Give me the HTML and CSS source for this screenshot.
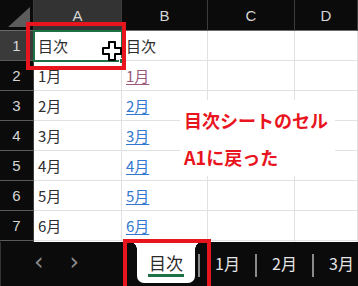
FILE: index.html
```html
<!DOCTYPE html>
<html lang="ja">
<head>
  <meta charset="UTF-8" />
  <title>目次シート</title>
  <link rel="stylesheet" href="styles.css">
</head>
<body>
  <div class="window">

    <!-- シート -->
    <div class="sheet">
      <div class="hd corner"></div>
      <div class="hd col is-sel">A</div>
      <div class="hd col">B</div>
      <div class="hd col">C</div>
      <div class="hd col">D</div>

      <div class="rh is-sel">1</div>
      <div class="cell">目次</div>
      <div class="cell">目次</div>
      <div class="cell"></div>
      <div class="cell"></div>

      <div class="rh">2</div>
      <div class="cell">1月</div>
      <div class="cell"><span class="link visited">1月</span></div>
      <div class="cell"></div>
      <div class="cell"></div>

      <div class="rh">3</div>
      <div class="cell">2月</div>
      <div class="cell"><span class="link">2月</span></div>
      <div class="cell"></div>
      <div class="cell"></div>

      <div class="rh">4</div>
      <div class="cell">3月</div>
      <div class="cell"><span class="link">3月</span></div>
      <div class="cell"></div>
      <div class="cell"></div>

      <div class="rh">5</div>
      <div class="cell">4月</div>
      <div class="cell"><span class="link">4月</span></div>
      <div class="cell"></div>
      <div class="cell"></div>

      <div class="rh">6</div>
      <div class="cell">5月</div>
      <div class="cell"><span class="link">5月</span></div>
      <div class="cell"></div>
      <div class="cell"></div>

      <div class="rh">7</div>
      <div class="cell">6月</div>
      <div class="cell"><span class="link">6月</span></div>
      <div class="cell"></div>
      <div class="cell"></div>

      <div class="rh"></div>
      <div class="cell"></div>
      <div class="cell"></div>
      <div class="cell"></div>
      <div class="cell"></div>
    </div>

    <!-- 選択セル -->
    <div class="selection"><span class="fill-handle"></span></div>
    <svg class="cursor" width="20" height="20" viewBox="0 0 20 20">
      <path d="M7 1 H13 V7 H19 V13 H13 V19 H7 V13 H1 V7 H7 Z" fill="#fff" stroke="#000" stroke-width="2" stroke-linejoin="round"/>
    </svg>

    <!-- 注釈 -->
    <div class="note">
      <p>目次シートのセル</p>
      <p>A1に戻った</p>
    </div>

    <!-- シートタブ -->
    <div class="tabbar">
      <div class="nav">
        <span class="arrow">&lsaquo;</span>
        <span class="arrow">&rsaquo;</span>
      </div>
      <div class="tab is-active"><span>目次</span></div>
      <div class="tab">1月</div>
      <div class="tab">2月</div>
      <div class="tab">3月</div>
    </div>

    <div class="mark mark-cell"></div>
    <div class="mark mark-tab"></div>
  </div>
</body>
</html>
```
FILE: styles.css
```css
* { box-sizing: border-box; margin: 0; padding: 0; }

body {
  background-color: #0b0b0b;
  font-family: "Noto Sans CJK JP", "Liberation Sans", sans-serif;
}

.window {
  position: relative;
  width: 358px;
  height: 286px;
  overflow: hidden;
  background-color: #0b0b0b;
}

/* シート */
.sheet {
  display: grid;
  grid-template-columns: 34px 88px 86px 87px 1fr;
  grid-template-rows: 31px repeat(8, 30px);
  height: 242px;
  overflow: hidden;
  background-color: #fff;
}

.hd {
  background-color: #0b0b0b;
  border-right: 1px solid #3c3c3c;
  border-bottom: 1px solid #6a6a6a;
  color: #d6d6d6;
  font-family: "Liberation Sans", sans-serif;
  font-size: 15px;
  display: flex;
  align-items: center;
  justify-content: center;
}

.hd.is-sel {
  background-color: #333;
}

.corner {
  position: relative;
}

.corner::after {
  content: '';
  position: absolute;
  right: 3px;
  bottom: 3px;
  border-left: 22px solid transparent;
  border-bottom: 20px solid #5c5c5c;
}

.rh {
  background-color: #0b0b0b;
  border-right: 1px solid #3c3c3c;
  border-bottom: 1px solid #5a5a5a;
  color: #d6d6d6;
  font-family: "Liberation Sans", sans-serif;
  font-size: 15px;
  display: flex;
  align-items: center;
  justify-content: center;
}

.rh.is-sel {
  background-color: #3a3a3a;
}

.cell {
  border-right: 1px solid #e1e1e1;
  border-bottom: 1px solid #e1e1e1;
  padding-left: 4px;
  color: #2e2e2e;
  font-size: 15px;
  line-height: 29px;
  white-space: nowrap;
}

.link {
  color: #3277d0;
  text-decoration: underline;
  text-underline-offset: 2px;
}

.link.visited {
  color: #9a5a7a;
}

/* 選択セル */
.selection {
  position: absolute;
  left: 33px;
  top: 30px;
  width: 90px;
  height: 32px;
  border: 2px solid #1e7145;
}

.fill-handle {
  position: absolute;
  right: -4px;
  bottom: -4px;
  width: 6px;
  height: 6px;
  background-color: #1e7145;
  border: 1px solid #fff;
}

.cursor {
  position: absolute;
  left: 102px;
  top: 41px;
}

/* 注釈 */
.note {
  position: absolute;
  left: 180px;
  top: 100px;
  width: 155px;
  height: 76px;
  background-color: #fff;
  padding: 2px 0 0 4px;
  color: #e8141e;
  font-size: 18px;
  font-weight: bold;
  line-height: 37px;
}

/* シートタブ */
.tabbar {
  display: flex;
  align-items: stretch;
  height: 44px;
  border-left: 1px solid #333;
  overflow: hidden;
}

.nav {
  display: flex;
  flex-shrink: 0;
  gap: 26px;
  width: 135px;
  padding-left: 33px;
  align-items: center;
}

.arrow {
  color: #8a8a8a;
  font-family: "DejaVu Sans", sans-serif;
  font-size: 24px;
  line-height: 1;
  margin-top: -4px;
}

.tab {
  display: flex;
  align-items: center;
  justify-content: center;
  flex-shrink: 0;
  width: 57px;
  padding: 0 0 2px 6px;
  color: #e6e6e6;
  font-size: 16px;
  position: relative;
}

.tab + .tab::before {
  content: '';
  position: absolute;
  left: 2px;
  top: 12px;
  height: 23px;
  border-left: 2px solid #8a8a8a;
}

.tab.is-active {
  width: 58px;
  padding: 0;
  margin: 0 1px 3px 1px;
  background-color: #fff;
  border-radius: 0 0 7px 7px;
  color: #2a2a2a;
  font-size: 17px;
}

.tab.is-active::before,
.tab.is-active::after {
  content: '';
  position: absolute;
  top: 0;
  width: 7px;
  height: 7px;
}

.tab.is-active::before {
  left: -7px;
  background: radial-gradient(circle at 0 100%, #0b0b0b 6.5px, #fff 7px);
}

.tab.is-active::after {
  right: -7px;
  background: radial-gradient(circle at 100% 100%, #0b0b0b 6.5px, #fff 7px);
}

.tab.is-active span {
  border-bottom: 3px solid #1e7145;
  line-height: 22px;
  padding: 0 1px;
  margin-top: 4px;
}

/* 赤枠 */
.mark {
  position: absolute;
  border: 4px solid #e8141e;
}

.mark-cell {
  left: 26px;
  top: 22px;
  width: 100px;
  height: 48px;
}

.mark-tab {
  left: 123px;
  top: 239px;
  width: 88px;
  height: 52px;
}
```
